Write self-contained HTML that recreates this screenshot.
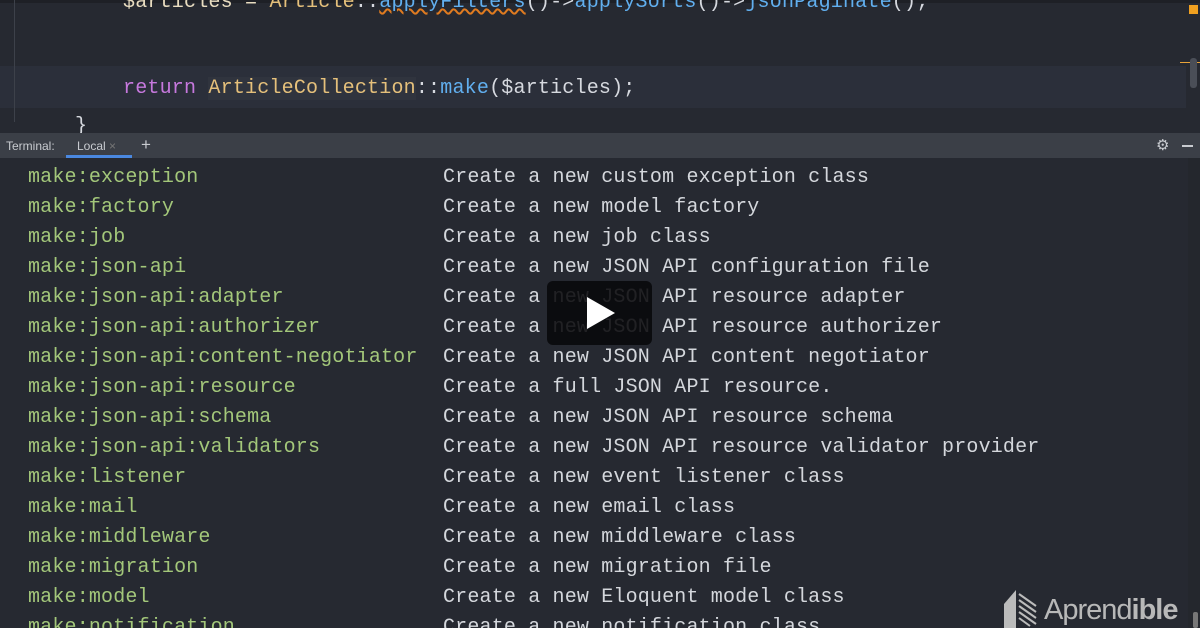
<!DOCTYPE html>
<html><head><meta charset="utf-8"><style>
html,body{margin:0;width:1200px;height:628px;overflow:hidden}
body{background:#262931;font-family:"Liberation Mono",monospace;position:relative}
.code{position:absolute;font-size:20px;white-space:pre;color:#d6d9df;letter-spacing:0.2px}
.hl{position:absolute;left:0;top:66px;width:1186px;height:42px;background:#2b2f3a}
.bar{position:absolute;left:0;top:133px;width:1200px;height:25px;background:#3b3f47;font-family:"Liberation Sans",sans-serif;font-size:12px;color:#c8cbd0}
.row{position:absolute;left:28px;font-size:20px;white-space:pre;color:#d4d7dc;line-height:30px;letter-spacing:0.17px}
.row b{font-weight:normal;color:#a3c77a;display:inline-block;width:415px}
</style></head><body>
<div style="position:absolute;left:0;top:0;width:1200px;height:3px;background:#1e2026"></div>
<div class="hl"></div>
<div style="position:absolute;left:1180px;top:62px;width:20px;height:1px;background:#e8a33a"></div>
<div style="position:absolute;left:1190px;top:58px;width:7px;height:30px;border-radius:3px;background:#4a4e57"></div>
<div style="position:absolute;left:1189px;top:5px;width:9px;height:9px;background:#f0a020"></div>
<div style="position:absolute;left:14px;top:0;width:1px;height:122px;background:#3d414a"></div>
<div class="code" style="left:123px;top:-9px"><span style="color:#e8dcc0">$articles = </span><span style="color:#e5c07b">Article</span>::<span style="color:#61afef;text-decoration:underline wavy #e07b20">applyFilters</span>()-&gt;<span style="color:#61afef">applySorts</span>()-&gt;<span style="color:#61afef">jsonPaginate</span>();</div>
<div class="code" style="left:123px;top:77px"><span style="color:#c678dd">return</span> <span style="color:#e5c07b;background:#30343e">ArticleCollection</span>::<span style="color:#61afef">make</span>($articles);</div>
<div class="code" style="left:75px;top:115px">}</div>
<div class="bar"><span style="position:absolute;left:6px;top:6px">Terminal:</span><span style="position:absolute;left:77px;top:6px">Local <span style="color:#777">×</span></span><div style="position:absolute;left:66px;top:22px;width:66px;height:3px;background:#4a88e0"></div><span style="position:absolute;left:141px;top:2px;font-size:17px">+</span><span style="position:absolute;left:1156px;top:3px;font-size:15px">⚙</span><div style="position:absolute;left:1182px;top:12px;width:11px;height:2px;background:#c8cbd0"></div></div>
<div style="position:absolute;left:1188px;top:158px;width:12px;height:470px;background:#24272d"></div>
<div class="row" style="top:163px"><b>make:exception</b>Create a new custom exception class
<b>make:factory</b>Create a new model factory
<b>make:job</b>Create a new job class
<b>make:json-api</b>Create a new JSON API configuration file
<b>make:json-api:adapter</b>Create a new JSON API resource adapter
<b>make:json-api:authorizer</b>Create a new JSON API resource authorizer
<b>make:json-api:content-negotiator</b>Create a new JSON API content negotiator
<b>make:json-api:resource</b>Create a full JSON API resource.
<b>make:json-api:schema</b>Create a new JSON API resource schema
<b>make:json-api:validators</b>Create a new JSON API resource validator provider
<b>make:listener</b>Create a new event listener class
<b>make:mail</b>Create a new email class
<b>make:middleware</b>Create a new middleware class
<b>make:migration</b>Create a new migration file
<b>make:model</b>Create a new Eloquent model class
<b>make:notification</b>Create a new notification class</div>
<div style="position:absolute;left:547px;top:281px;width:105px;height:64px;border-radius:6px;background:rgba(8,8,10,0.88)"></div>
<svg style="position:absolute;left:585px;top:296px" width="32" height="34"><polygon points="2,1 30,17 2,33" fill="#fff"/></svg>
<svg style="position:absolute;left:1004px;top:590px" width="34" height="38"><polygon points="0,14 12,0 12,38 0,38" fill="#bbb"/><g stroke="#bbb" stroke-width="2"><line x1="15" y1="4" x2="32" y2="16"/><line x1="15" y1="10" x2="32" y2="22"/><line x1="15" y1="16" x2="32" y2="28"/><line x1="15" y1="22" x2="32" y2="34"/><line x1="15" y1="28" x2="26" y2="36"/></g></svg>
<div style="position:absolute;left:1044px;top:594px;font-family:'Liberation Sans',sans-serif;font-size:29px;color:#b8b8b8;letter-spacing:-1px">Aprend<b>ible</b></div>
<div style="position:absolute;left:1193px;top:612px;width:5px;height:16px;border-radius:2px;background:#777"></div>
</body></html>
